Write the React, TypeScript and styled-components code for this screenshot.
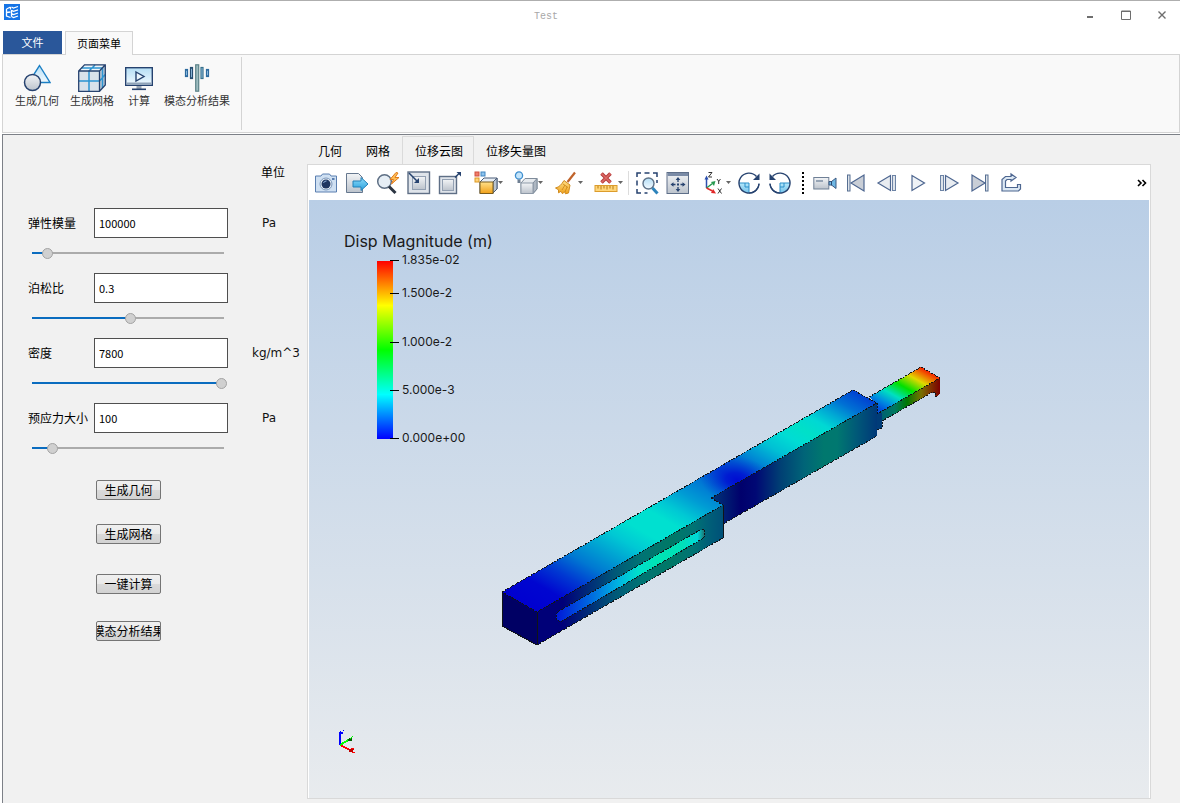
import React, { useState } from "react";
import styled, { createGlobalStyle } from "styled-components";

const GlobalStyle = createGlobalStyle`
  * { box-sizing: border-box; }
  html, body { margin: 0; background: #ffffff; }
  body, button, input {
    font-family: "Noto Sans CJK SC", "Noto Sans", sans-serif;
    font-size: 12px;
    line-height: 16px;
    color: #000000;
  }
  button { cursor: pointer; }
  svg { display: block; }
`;

/* ---------- window frame ---------- */

const Window = styled.div`
  display: flex;
  flex-direction: column;
  min-height: 100vh;
  border-top: 1px solid #aeaeae;
`;

const TitleBar = styled.header`
  display: flex;
  align-items: center;
  height: 30px;
  padding-left: 4px;
`;

const LogoBox = styled.div`
  flex: none;
  width: 16px;
  height: 24px;
`;

const Title = styled.h1`
  flex: 1;
  margin: 0;
  padding-top: 2px;
  text-align: center;
  font: 400 10px/16px "Liberation Mono", monospace;
  color: #a8a8a8;
`;

const WindowButton = styled.button`
  display: flex;
  align-items: center;
  justify-content: center;
  width: 36px;
  height: 28px;
  padding: 0 0 2px;
  border: 0;
  background: none;
`;

/* ---------- ribbon ---------- */

const RibbonTabs = styled.nav`
  display: flex;
  height: 23px;
  padding-left: 3px;
  gap: 3px;
`;

const RibbonTab = styled.button<{ $file?: boolean }>`
  position: relative;
  z-index: 1;
  height: ${(p) => (p.$file ? 23 : 24)}px;
  width: ${(p) => (p.$file ? 59 : 68)}px;
  padding: 0 0 2px;
  font-size: 11px;
  border: ${(p) => (p.$file ? "0" : "1px solid #d4d4d4")};
  border-bottom: 0;
  background: ${(p) => (p.$file ? "#2a579a" : "#f9f9f9")};
  color: ${(p) => (p.$file ? "#ffffff" : "#000000")};
`;

const Ribbon = styled.section`
  display: flex;
  height: 79px;
  margin-left: 2px;
  border: 1px solid #d4d4d4;
  background: #f9f9f9;
`;

const RibbonGroup = styled.div`
  display: flex;
  align-items: flex-start;
  gap: 11px;
  margin: 2px 0;
  padding: 7px 11px 0 12px;
  border-right: 1px solid #d4d4d4;
`;

const RibbonItem = styled.button`
  display: flex;
  flex-direction: column;
  align-items: center;
  padding: 0;
  border: 0;
  background: none;
  font-size: 11px;
  color: #333333;
  white-space: nowrap;
`;

/* ---------- workspace ---------- */

const Workspace = styled.main`
  flex: 1;
  display: flex;
  margin: 1px 0 0 2px;
  padding-bottom: 4px;
  border-top: 1px solid #7c8087;
  border-left: 1px solid #7c8087;
  background: #f1f1f1;
`;

const Sidebar = styled.form`
  flex: none;
  width: 303px;
  padding: 29px 0 0 25px;
`;

const Row = styled.div`
  display: flex;
  align-items: center;
`;

const UnitHeader = styled.div`
  padding-left: 233px;
  margin-bottom: 28px;
`;

const FieldLabel = styled.label`
  width: 66px;
  white-space: nowrap;
`;

const TextBox = styled.input`
  width: 134px;
  height: 30px;
  padding: 0 4px;
  border: 1px solid #4f4f4f;
  border-radius: 0;
  background: #ffffff;
  font-size: 11px;
  outline: 0;
`;

const Unit = styled.span<{ $indent: number }>`
  padding-left: ${(p) => 24 + p.$indent}px;
  font-family: "DejaVu Sans", sans-serif;
  color: #111111;
`;

const Slider = styled.input`
  appearance: none;
  display: block;
  width: 195px;
  height: 16px;
  margin: 7px 0 12px 4px;
  background:
    linear-gradient(#0a6cbf, #0a6cbf) left center / var(--fill) 2px no-repeat,
    linear-gradient(#ababab, #ababab) left center / 192px 2px no-repeat;
  outline: 0;
  &::-webkit-slider-thumb {
    appearance: none;
    width: 11px;
    height: 11px;
    border: 1px solid #a3a3a3;
    border-radius: 50%;
    background: #d0d0d0;
  }
`;

const Actions = styled.div`
  display: flex;
  flex-direction: column;
  padding-left: 68px;
`;

const ActionButton = styled.button<{ $space: number }>`
  display: flex;
  align-items: center;
  justify-content: center;
  width: 65px;
  height: 20px;
  margin-top: ${(p) => p.$space}px;
  padding: 0;
  overflow: hidden;
  border: 1px solid #757575;
  border-radius: 2px;
  background: linear-gradient(#f0f0f0, #e9e9e9 50%, #dadada 50%, #d2d2d2);
`;

const ActionText = styled.span`
  flex: none;
  white-space: nowrap;
`;

/* ---------- result views ---------- */

const Views = styled.section`
  flex: 1;
  min-width: 0;
  display: flex;
  flex-direction: column;
  margin-right: 29px;
`;

const ViewTabs = styled.div`
  display: flex;
  height: 29px;
  padding-top: 1px;
`;

const ViewTab = styled.button<{ $active: boolean }>`
  padding: ${(p) => (p.$active ? "0 10px 0 12px" : "1px 12px 0")};
  border: ${(p) => (p.$active ? "1px solid #dadada" : "0")};
  border-bottom: 0;
  background: none;
`;

const Pane = styled.div`
  flex: 1;
  display: flex;
  flex-direction: column;
  margin-left: 1px;
  padding: 0 1px;
  border: 1px solid #d9d9d9;
  background: #ffffff;
`;

const Toolbar = styled.div`
  display: flex;
  align-items: center;
  height: 35px;
  padding-left: 1px;
`;

const Tool = styled.button<{ $menu?: boolean }>`
  flex: none;
  display: flex;
  align-items: center;
  justify-content: ${(p) => (p.$menu ? "flex-start" : "center")};
  width: ${(p) => (p.$menu ? 40 : 31)}px;
  height: 32px;
  padding: ${(p) => (p.$menu ? "0 0 0 9px" : "0")};
  border: 0;
  background: none;
`;

const Separator = styled.span`
  width: 1px;
  height: 24px;
  margin: 0 2px 0 3px;
  background: #dcdcdc;
`;

const Handle = styled.span`
  width: 2px;
  height: 22px;
  margin: 0 5px 0 7px;
  background: repeating-linear-gradient(#000000 0 2px, transparent 2px 4px);
`;

const More = styled.button`
  margin-left: auto;
  padding: 0 1px;
  border: 0;
  background: none;
`;

const Scene = styled.svg`
  flex: 1;
  width: 100%;
  min-height: 560px;
  background: linear-gradient(#b9cee6, #e8ebee);
`;

const LegendText = styled.text`
  font-family: Inter, sans-serif;
  font-size: 12px;
  fill: #1a1a1a;
`;

const LegendTitle = styled(LegendText)`
  font-size: 16px;
`;

/* ---------- icons ---------- */

const navy = "#26426f";

const Defs = () => (
  <svg width="0" height="0" style={{ position: "absolute" }} aria-hidden="true">
    <defs>
      <linearGradient id="steel" x2="0" y2="1">
        <stop stopColor="#f2f4f6" />
        <stop offset="1" stopColor="#bcc3cc" />
      </linearGradient>
      <linearGradient id="sky" x2="0" y2="1">
        <stop stopColor="#b5def5" />
        <stop offset="1" stopColor="#f2faff" />
      </linearGradient>
      <linearGradient id="cyan" x2="0" y2="1">
        <stop stopColor="#8fdcfa" />
        <stop offset="1" stopColor="#27a0dd" />
      </linearGradient>
      <linearGradient id="gold" x2="0" y2="1">
        <stop stopColor="#ffe08a" />
        <stop offset="1" stopColor="#f0a018" />
      </linearGradient>
    </defs>
  </svg>
);

const Icon = ({ size = 24, children }: { size?: number; children: React.ReactNode }) => (
  <svg width={size} height={size} viewBox={`0 0 ${size} ${size}`} fill="none" aria-hidden="true">
    {children}
  </svg>
);

const Logo = () => (
  <Icon size={16}>
    <rect width="16" height="16" fill="#1574e6" />
    <path d="M2.500 5l4-2M2.500 5v7l4 1.500M2.500 8.500l4-.5M6.500 3v2.500" stroke="#fff" strokeWidth="1.300" />
    <path d="M7.500 3l2 1 4.500-1.500M7.500 6.300l2 1 4.500-1.500M7.500 9.500l2 1L14 9M7.500 12.500l2 1L14 12M7.500 6v6.500" stroke="#fff" strokeWidth="1.300" />
  </Icon>
);

const GeometryIcon = () => (
  <Icon size={28}>
    <path d="M16.500 1.500L27 18.500H10L8.500 14z" fill="url(#sky)" stroke="#1b7fc4" strokeWidth="1.400" />
    <circle cx="9.500" cy="18.500" r="8" fill="url(#steel)" stroke={navy} strokeWidth="1.500" />
  </Icon>
);

const MeshIcon = () => (
  <Icon size={28}>
    <path d="M.7 7L6.500 .8H27.300V21L21.500 27.300H.7z" fill="#d9e2eb" />
    <path d="M.7 7L6.500 .8H27.300L21.500 7z" fill="#eef6fb" />
    <path d="M21.500 7l5.800-6.200V21l-5.800 6.300z" fill="#b9c6d4" />
    <path d="M11 27V7l6-6M1 17h20.500l5.800-6.500M3.500 4h21v20" stroke="#2b94d2" strokeWidth="1.500" />
    <path d="M.7 7L6.500 .8H27.300V21L21.500 27.300H.7zM.7 7h20.800v20.300M21.500 7l5.800-6.200" stroke={navy} strokeWidth="1.300" />
  </Icon>
);

const ComputeIcon = () => (
  <Icon size={28}>
    <rect x=".7" y="3.700" width="26.600" height="17.600" fill="url(#sky)" stroke={navy} strokeWidth="1.400" />
    <path d="M1.400 19.500h25" stroke="#8fa3b8" strokeWidth="2" />
    <path d="M11 8l8 4.500-8 4.500z" fill="#eaf5fc" stroke={navy} strokeWidth="1.400" />
    <path d="M11.500 22h5v3h-5z" fill="#9aa6b3" />
    <path d="M7 25.300h14" stroke={navy} strokeWidth="1.600" />
  </Icon>
);

const ModalIcon = () => (
  <Icon size={28}>
    <g stroke="#2c6a9e" strokeWidth="1.200" fill="#9fc9ea">
      <rect x="2.500" y="5.500" width="2" height="7" />
      <rect x="7.500" y="3.500" width="2" height="11" stroke="#274e70" />
      <rect x="12.700" y=".8" width="3" height="26.400" fill="#9dbcc0" stroke="#5d8388" />
      <rect x="18" y="3.500" width="2" height="11" stroke="#37718c" />
      <rect x="23.500" y="5.500" width="2" height="7" />
    </g>
  </Icon>
);

const CameraIcon = () => (
  <Icon>
    <path d="M2 5h5l1.500-2h7L17 5h5.500v16h-21V5z" fill="#cfe0f2" stroke="#5b7fb0" />
    <circle cx="12" cy="13" r="6" fill="#e8f0f8" stroke="#7c97bb" />
    <circle cx="12" cy="13" r="4.500" fill="#1f3560" />
    <path d="M9.500 12a3 3 0 013-2" stroke="#8fb0dc" />
    <rect x="18" y="7" width="2.500" height="2" fill="#5b7fb0" />
  </Icon>
);

const ExportIcon = () => (
  <Icon>
    <path d="M1.500 2.500h12l4 4v15h-16z" fill="url(#steel)" stroke="#66788f" />
    <path d="M8 10h8V6.500l7 6.500-7 6.500V16H8z" fill="url(#cyan)" stroke="#2380b8" />
  </Icon>
);

const QuickSearchIcon = () => (
  <Icon>
    <circle cx="8.500" cy="10.500" r="6.800" fill="#e6eef5" stroke="#5e6f84" strokeWidth="1.500" />
    <path d="M13 15.500l6.500 6.500" stroke="#2b3442" strokeWidth="3" />
    <path d="M20 1.500l-6 7h3.500L15.500 13l7.500-6.500h-4L22 2z" fill="#ffbe55" stroke="#e07b1c" />
  </Icon>
);

const ZoomBoxIcon = () => (
  <Icon>
    <rect x="1" y="1" width="21.500" height="21.500" fill="#dfe4ea" stroke="#5f6f86" strokeWidth="1.400" />
    <rect x="5.500" y="5.500" width="13" height="13" fill="url(#steel)" stroke="#93a0b2" />
    <path d="M2 2l9 9" stroke={navy} strokeWidth="1.500" />
    <path d="M12 7v5H7z" fill={navy} />
  </Icon>
);

const ZoomOutBoxIcon = () => (
  <Icon>
    <rect x="1.500" y="5.500" width="17" height="17" fill="#dfe4ea" stroke="#5f6f86" strokeWidth="1.400" />
    <rect x="4.500" y="8.500" width="11" height="11" fill="url(#steel)" stroke="#93a0b2" />
    <path d="M17 6.500l5-5" stroke={navy} strokeWidth="1.500" />
    <path d="M18.500 1h4.500v4.500z" fill={navy} />
  </Icon>
);

const ColorCubeIcon = () => (
  <Icon>
    <rect x="1" y="1" width="4" height="4" fill="#ef7d6a" stroke="#d15140" />
    <rect x="7" y="1" width="4" height="4" fill="#8cc4ee" stroke="#4285c0" />
    <rect x="1" y="7" width="4" height="4" fill="#ffd27a" stroke="#dd9a24" />
    <path d="M6 11l4-4h13v11l-4 4H6z" fill="#e8eef4" stroke="#4a5d78" />
    <path d="M19 11l4-4v11l-4 4z" fill="#b9c4d0" stroke="#4a5d78" />
    <rect x="6" y="11" width="13" height="11.500" fill="url(#gold)" stroke="#7b5c1c" />
  </Icon>
);

const LightCubeIcon = () => (
  <Icon>
    <path d="M7 12l4-4.500h12V18l-4 4.500H7z" fill="#e6eaee" stroke="#7f8c9b" />
    <path d="M19 12l4-4.500V18l-4 4.500z" fill="#aeb7c2" stroke="#7f8c9b" />
    <rect x="7" y="12" width="12" height="10.500" fill="url(#steel)" stroke="#8d99a7" />
    <circle cx="5" cy="4.500" r="3.600" fill="#c4e5fb" stroke="#3f8fcf" strokeWidth="1.300" />
    <path d="M3.500 8.500h3v3.500h-3z" fill="#6f7f92" />
  </Icon>
);

const BroomIcon = () => (
  <Icon>
    <path d="M21 1.500L13.500 11" stroke="#c0632a" strokeWidth="2.200" />
    <path d="M10 9.500l6 4.500-1.500 8-3 .8-1-2-2 2-1.500-2.500-2.500 1.500v-3L1.500 17c4-1 6-3.500 8.500-7.500z" fill="url(#gold)" stroke="#d08a1c" />
    <path d="M9 13l5 3.500M11 14l-3 5M13 16l-2 5" stroke="#c98416" strokeWidth=".8" />
  </Icon>
);

const RulerIcon = () => (
  <Icon>
    <path d="M7.500 2.500l9 9M16.500 2.500l-9 9" stroke="#b63a3a" strokeWidth="3.600" />
    <path d="M7.500 2.500l9 9M16.500 2.500l-9 9" stroke="#dc6a66" strokeWidth="1.600" />
    <rect x="1" y="14.500" width="22" height="6" fill="#ffd679" stroke="#dc9c2c" />
    <path d="M4 15v2.500M7 15v3.500M10 15v2.500M13 15v3.500M16 15v2.500M19 15v3.500" stroke="#b87a14" />
  </Icon>
);

const SelectZoomIcon = () => (
  <Icon>
    <path d="M2 6V2h4M18 2h4v4M2 18v4h4M9.500 2h5M2 9.500v5M22 9v3M9.500 22h3" stroke={navy} strokeWidth="1.500" />
    <circle cx="13.500" cy="12.500" r="5.500" fill="url(#sky)" stroke="#5e7288" strokeWidth="1.400" />
    <path d="M17.500 17l5 5.500" stroke="#2d83bb" strokeWidth="3" />
  </Icon>
);

const FitIcon = () => (
  <Icon>
    <rect x="1" y="1.500" width="21.500" height="21" fill="url(#steel)" stroke="#5e6f89" />
    <rect x="1.500" y="2" width="20.500" height="3" fill="#7a8ba6" />
    <path d="M12 8v3M12 16v3M9.500 13.500h-3M14.500 13.500h3" stroke={navy} strokeWidth="1.300" />
    <path d="M12 6l2.300 3H9.700zM12 21l2.300-3H9.700zM4.500 13.500l3-2.300v4.600zM19.500 13.500l-3-2.300v4.600z" fill={navy} />
    <rect x="11" y="12.500" width="2" height="2" fill={navy} />
  </Icon>
);

const AxesIcon = () => (
  <Icon>
    <path d="M4.500 17V7" stroke="#2c4fae" strokeWidth="1.500" />
    <path d="M4.500 4.500l2 4h-4z" fill="#2c4fae" />
    <path d="M4.500 17l6-4.500" stroke="#26994f" strokeWidth="1.500" />
    <path d="M13.500 10l-1.500 5-3-4z" fill="#26994f" />
    <path d="M4.500 17l6 3" stroke="#e02828" strokeWidth="1.500" />
    <path d="M14 22.500l-5-.5 2.200-4z" fill="#e02828" />
    <path d="M6.500 1.500h3.500l-3.500 4.500h3.500M15 8l1.700 2.200L18.500 8M16.700 10v3M16 17.500l3.500 5M19.500 17.500l-3.500 5" stroke="#333333" />
  </Icon>
);

const RotateIcon = ({ left = false }: { left?: boolean }) => (
  <Icon>
    <g transform={left ? "matrix(-1 0 0 1 24 0)" : undefined}>
      <path d="M2.500 12H12v10C7 22.500 2.500 18 2.500 12z" fill="url(#cyan)" opacity=".65" />
      <path d="M2 12h10v10M8 12v4h4" stroke="#2b8fc9" />
      <path d="M22 12.500A10 10 0 1119.500 5.500" stroke={navy} strokeWidth="1.400" />
      <path d="M22 13a10 10 0 01-10 9" stroke={navy} strokeWidth="1.200" />
      <path d="M22.500 2.500v6.500h-6.500z" fill={navy} />
    </g>
  </Icon>
);

const VideoIcon = () => (
  <Icon>
    <rect x=".8" y="6.500" width="15" height="11.500" fill="url(#steel)" stroke="#6f8096" />
    <rect x="3" y="9" width="7" height="2" fill="#96a4b5" />
    <path d="M16 10.500h2.500l4.500-3.500v10.500l-4.500-3.500H16z" fill="#6fb8e4" stroke="#3c5a82" />
    <path d="M18.500 10v4.500" stroke="#2d4a73" />
  </Icon>
);

const FirstIcon = () => (
  <Icon>
    <rect x="3.500" y="4" width="2.500" height="16" fill="#dde3ea" stroke="#566f92" />
    <path d="M20 4v16L7 12z" fill="#c9ced6" stroke="#4d6690" strokeWidth="1.200" />
  </Icon>
);

const LastIcon = () => (
  <Icon>
    <rect x="17.500" y="4" width="2.500" height="16" fill="#dde3ea" stroke="#566f92" />
    <path d="M4 4v16l13-8z" fill="#c9ced6" stroke="#4d6690" strokeWidth="1.200" />
  </Icon>
);

const PrevIcon = () => (
  <Icon>
    <path d="M15.500 4.500v15L3 12z" fill="#e8ecf1" stroke="#4d6690" strokeWidth="1.200" />
    <rect x="17.500" y="4.500" width="3" height="15" fill="#dde3ea" stroke="#6c83a5" />
  </Icon>
);

const NextIcon = () => (
  <Icon>
    <path d="M8.500 4.500v15L21 12z" fill="#e8ecf1" stroke="#4d6690" strokeWidth="1.200" />
    <rect x="3.500" y="4.500" width="3" height="15" fill="#dde3ea" stroke="#6c83a5" />
  </Icon>
);

const PlayIcon = () => (
  <Icon>
    <path d="M6 4.500v15L18.500 12z" fill="#eef2f6" stroke="#4d6690" strokeWidth="1.200" />
  </Icon>
);

const LoopIcon = () => (
  <Icon>
    <path
      d="M3 20V8.500L6.500 5.500h5.500V3l5 3.500-5 3.500V8.500H8L6.500 10v6.500h12v-3h3V18l-2 2z"
      fill="#dce8f3"
      stroke="#4d6690"
      strokeWidth="1.200"
    />
  </Icon>
);

const Caret = () => (
  <svg width="5" height="3" viewBox="0 0 5 3" aria-hidden="true">
    <path d="M0 0h5L2.500 3z" fill="#666666" />
  </svg>
);

/* ---------- finite element result ---------- */

type Stops = [number, string][];

const Gradient = ({ id, from, to, stops }: { id: string; from: [number, number]; to: [number, number]; stops: Stops }) => (
  <linearGradient id={id} gradientUnits="userSpaceOnUse" x1={from[0]} y1={from[1]} x2={to[0]} y2={to[1]}>
    {stops.map(([offset, color]) => (
      <stop key={offset} offset={offset} stopColor={color} />
    ))}
  </linearGradient>
);

const topStops: Stops = [
  [0, "#0000d0"], [0.07, "#0006d0"], [0.13, "#0038d2"], [0.19, "#0078d2"], [0.24, "#009cd2"], [0.3, "#00c8d4"], [0.35, "#00e0d0"],
  [0.41, "#00e0d0"], [0.45, "#00c8d4"], [0.5, "#009cd4"], [0.56, "#0074d4"], [0.61, "#0048d2"], [0.65, "#0060d2"],
  [0.695, "#0090d4"], [0.74, "#00c0d4"], [0.79, "#00dcd4"], [0.83, "#00e0c8"], [0.87, "#00d8d4"], [0.91, "#00a8d4"], [0.95, "#0070d4"], [1, "#0040d2"],
];
const frontStops: Stops = [
  [0, "#000078"], [0.14, "#000078"], [0.28, "#002c78"], [0.42, "#005878"], [0.56, "#007474"],
  [0.72, "#007866"], [0.84, "#007474"], [0.92, "#006078"], [1, "#005078"],
];
const rearStops: Stops = [
  [0, "#003878"], [0.18, "#00006c"], [0.27, "#000874"], [0.42, "#004074"], [0.56, "#006478"],
  [0.68, "#00786e"], [0.76, "#007870"], [0.88, "#005878"], [1, "#003878"],
];
const slotStops: Stops = [
  [0, "#0018d8"], [0.25, "#0070e0"], [0.42, "#00b4e0"], [0.55, "#00e0cc"], [0.68, "#00e4b4"], [0.85, "#00e0b8"], [0.95, "#00d8d8"], [1, "#206868"],
];
const tipTopStops: Stops = [
  [0, "#0050e0"], [0.15, "#0090e0"], [0.33, "#00e0c0"], [0.54, "#00e000"], [0.76, "#e0d800"], [0.9, "#f06800"], [1, "#f01800"],
];
const tipSideStops: Stops = [
  [0, "#005878"], [0.28, "#007860"], [0.48, "#007800"], [0.7, "#787000"], [0.86, "#803000"], [1, "#7a0000"],
];

const Model = () => (
  <g transform="translate(-309 -200)" shapeRendering="crispEdges" strokeLinejoin="round">
    <defs>
      <Gradient id="top" from={[502, 592]} to={[677, 288]} stops={topStops} />
      <Gradient id="front" from={[537, 0]} to={[723, 0]} stops={frontStops} />
      <Gradient id="rear" from={[711, 0]} to={[877, 0]} stops={rearStops} />
      <Gradient id="slot" from={[556, 0]} to={[705, 0]} stops={slotStops} />
      <Gradient id="tipTop" from={[873, 405]} to={[901, 355]} stops={tipTopStops} />
      <Gradient id="tipSide" from={[877, 0]} to={[940, 0]} stops={tipSideStops} />
      <radialGradient id="node" gradientUnits="userSpaceOnUse" cx="0" cy="0" r="1" gradientTransform="translate(737 480) rotate(10) scale(38 24)">
        <stop stopColor="#000cd2" />
        <stop offset=".3" stopColor="#0014d2" stopOpacity=".85" />
        <stop offset="1" stopColor="#0040d2" stopOpacity="0" />
      </radialGradient>
    </defs>
    <path d="M869 397L921 367L940 378L877 414V404z" fill="url(#tipTop)" />
    <path d="M877 414L940 378V393L937 396H935V393L931 393L882 421H877z" fill="url(#tipSide)" />
    <path d="M877 413H882V428L877 430z" fill="#003c78" />
    <path d="M711 498L877 403V436L723 524V505z" fill="url(#rear)" />
    <path d="M502 592L853 390L877 403L711 498L723 505L537 612z" fill="url(#top)" />
    <path d="M502 592L853 390L877 403L711 498L723 505L537 612z" fill="url(#node)" />
    <path d="M502 592L537 612V645L502 626z" fill="#000064" />
    <path d="M537 612L723 505V538L537 645z" fill="url(#front)" />
    <path d="M556 617Q556 613 559 611L700 530Q705 528 705 533Q705 537 702 539L562 621Q556 622 556 617z" fill="url(#slot)" />
    <g fill="none" stroke="#101418">
      <path d="M502 592L853 390L877 403L711 498L723 505L537 612z" strokeDasharray="2 1" />
      <path d="M502 592V626L537 645M723 538V505M537 612V645" />
      <path d="M537 645L723 538M723 524L877 436M877 430L882 428V421L931 393" strokeDasharray="2 1" />
      <path d="M877 403V414M869 397L921 367L940 378L877 414M937 396H935V392H931" strokeDasharray="2 1" />
      <path d="M556 617Q556 613 559 611L700 530Q705 528 705 533Q705 537 702 539L562 621Q556 622 556 617z" strokeDasharray="2 1" />
    </g>
  </g>
);

const ticks: [number, string][] = [
  [60, "1.835e-02"], [93, "1.500e-2"], [142, "1.000e-2"], [190, "5.000e-3"], [238, "0.000e+00"],
];

const Legend = () => (
  <g>
    <defs>
      <linearGradient id="rainbow" x2="0" y2="1">
        <stop stopColor="#ff0000" />
        <stop offset=".25" stopColor="#ffff00" />
        <stop offset=".5" stopColor="#00ff00" />
        <stop offset=".75" stopColor="#00ffff" />
        <stop offset="1" stopColor="#0000ff" />
      </linearGradient>
    </defs>
    <LegendTitle x="35" y="47">Disp Magnitude (m)</LegendTitle>
    <rect x="68" y="61" width="16" height="178" fill="url(#rainbow)" />
    {ticks.map(([y, label]) => (
      <g key={label}>
        <rect x="81" y={y} width="9" height="1" fill="#000000" />
        <LegendText x="93" y={y + 4}>{label}</LegendText>
      </g>
    ))}
  </g>
);

const Triad = () => (
  <g transform="translate(30 530)" fill="none" shapeRendering="crispEdges">
    <path d="M1 15V2M1 3h3" stroke="#0000ff" strokeWidth="2" />
    <path d="M4 .5h1M1 1h1" stroke="#0000ff" />
    <path d="M1 15l10-6" stroke="#00ff00" strokeWidth="2" />
    <path d="M9 9l4-2v4H9z" fill="#006000" />
    <path d="M11 8.500l3-2" stroke="#00ff00" />
    <path d="M2 15.500l10 5" stroke="#ff0000" strokeWidth="2" />
    <path d="M10 18.500l5 1-2 3-3-1z" fill="#c00000" />
    <path d="M12 18.500h3M13 22.500h3" stroke="#ff0000" />
  </g>
);

/* ---------- page ---------- */

const ribbonItems = [
  { label: "生成几何", icon: <GeometryIcon /> },
  { label: "生成网格", icon: <MeshIcon /> },
  { label: "计算", icon: <ComputeIcon /> },
  { label: "模态分析结果", icon: <ModalIcon /> },
];

const fields = [
  { id: "modulus", label: "弹性模量", value: "100000", max: 1850000, unit: "Pa", indent: 10 },
  { id: "poisson", label: "泊松比", value: "0.3", max: 0.594, unit: "", indent: 10 },
  { id: "density", label: "密度", value: "7800", max: 7800, unit: "kg/m^3", indent: 0 },
  { id: "prestress", label: "预应力大小", value: "100", max: 1220, unit: "Pa", indent: 10 },
];

const actions = [
  { label: "生成几何", space: 12 },
  { label: "生成网格", space: 24 },
  { label: "一键计算", space: 30 },
  { label: "模态分析结果", space: 27 },
];

const viewTabs = ["几何", "网格", "位移云图", "位移矢量图"];

const Field = ({ id, label, value: initial, max, unit, indent }: (typeof fields)[number]) => {
  const [value, setValue] = useState(initial);
  const ratio = Math.min(1, Math.max(0, Number(value) / max || 0));
  return (
    <div>
      <Row>
        <FieldLabel htmlFor={id}>{label}</FieldLabel>
        <TextBox id={id} value={value} onChange={(e) => setValue(e.target.value)} />
        <Unit $indent={indent}>{unit}</Unit>
      </Row>
      <Slider
        type="range"
        aria-label={label}
        min={0}
        max={max}
        step="any"
        value={Number(value) || 0}
        onChange={(e) => setValue(e.target.value)}
        style={{ "--fill": `${Math.round(6 + ratio * 184)}px` } as React.CSSProperties}
      />
    </div>
  );
};

const ToolButton = ({ name, menu, children }: { name: string; menu?: boolean; children: React.ReactNode }) => (
  <Tool type="button" aria-label={name} $menu={menu}>
    {children}
    {menu && <Caret />}
  </Tool>
);

export default function App() {
  const [view, setView] = useState("位移云图");
  return (
    <Window>
      <GlobalStyle />
      <Defs />
      <TitleBar>
        <LogoBox>
          <Logo />
        </LogoBox>
        <Title>Test</Title>
        <WindowButton aria-label="Minimize">
          <Icon size={10}><path d="M2 7h6" stroke="#6e6e6e" strokeWidth="2" /></Icon>
        </WindowButton>
        <WindowButton aria-label="Maximize">
          <Icon size={10}><path d="M.5 1h9v8.500h-9zM1 1.500h8" stroke="#6e6e6e" /></Icon>
        </WindowButton>
        <WindowButton aria-label="Close">
          <Icon size={10}><path d="M1.500 1.500l7 7M8.500 1.500l-7 7" stroke="#6e6e6e" strokeWidth="1.400" /></Icon>
        </WindowButton>
      </TitleBar>

      <RibbonTabs>
        <RibbonTab $file>文件</RibbonTab>
        <RibbonTab>页面菜单</RibbonTab>
      </RibbonTabs>
      <Ribbon>
        <RibbonGroup>
          {ribbonItems.map((item) => (
            <RibbonItem key={item.label}>
              {item.icon}
              {item.label}
            </RibbonItem>
          ))}
        </RibbonGroup>
      </Ribbon>

      <Workspace>
        <Sidebar onSubmit={(e) => e.preventDefault()}>
          <UnitHeader>单位</UnitHeader>
          {fields.map((field) => (
            <Field key={field.id} {...field} />
          ))}
          <Actions>
            {actions.map((action) => (
              <ActionButton key={action.label} type="button" $space={action.space}>
                <ActionText>{action.label}</ActionText>
              </ActionButton>
            ))}
          </Actions>
        </Sidebar>

        <Views>
          <ViewTabs role="tablist">
            {viewTabs.map((tab) => (
              <ViewTab key={tab} role="tab" aria-selected={tab === view} $active={tab === view} onClick={() => setView(tab)}>
                {tab}
              </ViewTab>
            ))}
          </ViewTabs>
          <Pane>
            <Toolbar>
              <ToolButton name="Screenshot"><CameraIcon /></ToolButton>
              <ToolButton name="Export"><ExportIcon /></ToolButton>
              <ToolButton name="Quick query"><QuickSearchIcon /></ToolButton>
              <ToolButton name="Zoom in box"><ZoomBoxIcon /></ToolButton>
              <ToolButton name="Zoom out box"><ZoomOutBoxIcon /></ToolButton>
              <ToolButton name="Colors" menu><ColorCubeIcon /></ToolButton>
              <ToolButton name="Lighting" menu><LightCubeIcon /></ToolButton>
              <ToolButton name="Clear" menu><BroomIcon /></ToolButton>
              <ToolButton name="Remove measurement" menu><RulerIcon /></ToolButton>
              <Separator />
              <ToolButton name="Zoom to selection"><SelectZoomIcon /></ToolButton>
              <ToolButton name="Fit view"><FitIcon /></ToolButton>
              <ToolButton name="View direction" menu><AxesIcon /></ToolButton>
              <ToolButton name="Rotate clockwise"><RotateIcon /></ToolButton>
              <ToolButton name="Rotate counterclockwise"><RotateIcon left /></ToolButton>
              <Handle />
              <ToolButton name="Record"><VideoIcon /></ToolButton>
              <ToolButton name="First frame"><FirstIcon /></ToolButton>
              <ToolButton name="Previous frame"><PrevIcon /></ToolButton>
              <ToolButton name="Play"><PlayIcon /></ToolButton>
              <ToolButton name="Next frame"><NextIcon /></ToolButton>
              <ToolButton name="Last frame"><LastIcon /></ToolButton>
              <ToolButton name="Loop"><LoopIcon /></ToolButton>
              <More type="button" aria-label="More tools">
                <Icon size={12}><path d="M2 3l3 3-3 3M6.500 3l3 3-3 3" stroke="#000000" strokeWidth="1.600" /></Icon>
              </More>
            </Toolbar>
            <Scene role="img" aria-label="Displacement contour">
              <Legend />
              <Model />
              <Triad />
            </Scene>
          </Pane>
        </Views>
      </Workspace>
    </Window>
  );
}
